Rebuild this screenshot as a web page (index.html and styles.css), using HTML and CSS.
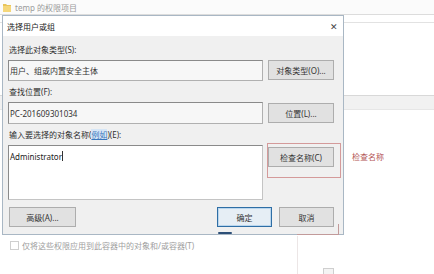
FILE: index.html
```html
<!DOCTYPE html>
<html lang="zh-CN">
<head>
<meta charset="utf-8">
<title>选择用户或组</title>
<link rel="stylesheet" href="styles.css">
</head>
<body>
<div class="bgwin">
  <div class="bg-head">
    <svg class="folder" width="8" height="9" viewBox="0 0 8 9"><path d="M0 1h3l1 1h4v7H0z" fill="#e8c45a"/><path d="M0 3h8v6H0z" fill="#f5d77a"/></svg>
    <span>temp 的权限项目</span>
  </div>
  <div class="bg-list"><div class="bg-row"></div></div>
  <div class="bg-check"><span class="box"></span><span>仅将这些权限应用到此容器中的对象和/或容器(T)</span></div>
</div>

<div class="dialog">
  <div class="dlg-title"><span>选择用户或组</span><span class="close">✕</span></div>
  <div class="dlg-body">
    <div class="label">选择此对象类型(S):</div>
    <div class="row">
      <div class="field">用户、组或内置安全主体</div>
      <button class="btn">对象类型(O)...</button>
    </div>
    <div class="label gap">查找位置(F):</div>
    <div class="row center">
      <div class="field tall">PC-201609301034</div>
      <button class="btn">位置(L)...</button>
    </div>
    <div class="label gap">输入要选择的对象名称(<span class="link">例如</span>)(E):</div>
    <div class="row">
      <div class="area">Administrator<span class="caret"></span></div>
      <button class="btn check">检查名称(C)</button>
    </div>
    <div class="footer">
      <button class="btn adv">高级(A)...</button>
      <div class="ok-cancel">
        <button class="btn small primary">确定</button>
        <button class="btn small">取消</button>
      </div>
    </div>
  </div>
</div>

<div class="anno-box"></div>
<div class="anno-text">检查名称</div>
<div class="anno-cancel"></div>
<div class="anno-tail"></div>
<div class="pen-mark"></div>
<div class="scroll-sq"></div>
</body>
</html>
```

FILE: styles.css
```css
html, body {
  margin: 0;
  padding: 0;
}
body {
  width: 434px;
  height: 274px;
  overflow: hidden;
  position: relative;
  background: #fff;
  font-family: "Noto Sans", "Noto Sans CJK SC", sans-serif;
  font-size: 8px;
  color: #2e2e2e;
}
.bg-head {
  height: 14px;
  border-bottom: 1px solid #dcdcdc;
  display: flex;
  align-items: center;
  gap: 4px;
  padding-left: 3px;
  color: #9a9a9a;
  background: #fbfbfb;
}
.bg-list {
  margin-top: 7px;
  border-top: 1px solid #e2e2e2;
  height: 213px;
}
.bg-row {
  margin-top: 72px;
  height: 13px;
  background: #f1f1f1;
  border-top: 1px solid #d8d8d8;
  border-bottom: 1px solid #e6e6e6;
}
.bg-check {
  display: flex;
  align-items: center;
  gap: 3px;
  padding-left: 10px;
  height: 14px;
  margin-top: 2px;
  color: #a0a0a0;
}
.box {
  width: 7px;
  height: 7px;
  border: 1px solid #cfcfcf;
  background: #fff;
}

.dialog {
  position: absolute;
  left: 2px;
  top: 15px;
  width: 340px;
  height: 218px;
  border: 1px solid #a9b7c4;
  background: #f0f0f0;
}
.dlg-title {
  height: 20px;
  background: #fff;
  display: flex;
  align-items: center;
  justify-content: space-between;
  padding: 0 5px 0 4px;
  color: #222;
}
.close {
  font-size: 9px;
  color: #444;
}
.dlg-body {
  padding: 8px 9px 0 5px;
}
.label {
  height: 12px;
  line-height: 12px;
  padding-left: 1px;
  margin-bottom: 4px;
}
.label.gap {
  margin-top: 5px;
}
.link {
  color: #3a78bd;
  background: #d6e6f6;
  text-decoration: underline;
}
.row {
  display: flex;
  gap: 5px;
  align-items: flex-start;
}
.row.center {
  align-items: center;
}
.field {
  width: 252px;
  height: 19px;
  border: 1px solid #8a8a8a;
  border-bottom-color: #b0b0b0;
  border-right-color: #b0b0b0;
  background: #f7f7f7;
  display: flex;
  align-items: center;
  padding-left: 1px;
  box-sizing: content-box;
  color: #333;
}
.field.tall {
  height: 20px;
}
.area {
  width: 252px;
  height: 48px;
  border: 1px solid #8a8a8a;
  border-bottom-color: #c4c4c4;
  border-right-color: #c4c4c4;
  background: #fff;
  padding: 5px 0 0 1px;
  box-sizing: content-box;
  line-height: 12px;
  color: #222;
}
.caret {
  display: inline-block;
  width: 1px;
  height: 10px;
  background: #333;
  vertical-align: -1px;
}
.btn {
  width: 66px;
  height: 20px;
  border: 1px solid #adadad;
  background: #e1e1e1;
  font-family: inherit;
  font-size: 8px;
  color: #333;
  padding: 0;
  margin: 0;
  box-sizing: border-box;
}
.btn.check {
  margin-top: 2px;
}
.footer {
  margin-top: 7px;
  display: flex;
  justify-content: space-between;
  align-items: center;
}
.btn.adv {
  width: 67px;
  margin-left: 1px;
}
.ok-cancel {
  display: flex;
  gap: 7px;
}
.btn.small {
  width: 55px;
}
.btn.primary {
  border: 1px solid #2f6ea5;
  box-shadow: inset 0 0 0 1px #b9d6ee;
  background: #e6eef5;
}

.anno-box {
  position: absolute;
  left: 267px;
  top: 143px;
  width: 72px;
  height: 33px;
  border: 1px solid #d49a9a;
}
.anno-text {
  position: absolute;
  left: 352px;
  top: 151px;
  line-height: 12px;
  color: #b35555;
}
.anno-cancel {
  position: absolute;
  left: 297px;
  top: 224px;
  width: 41px;
  height: 10px;
  border-right: 1px solid #c29a9a;
  border-bottom: 1px solid #c29a9a;
}
.anno-tail {
  position: absolute;
  left: 297px;
  top: 236px;
  width: 1px;
  height: 38px;
  background: #ece6e6;
}
.pen-mark {
  position: absolute;
  left: 218px;
  top: 232px;
  width: 14px;
  height: 2px;
  border-radius: 1px;
  background: #2d4f77;
}
.scroll-sq {
  position: absolute;
  left: 323px;
  top: 268px;
  width: 9px;
  height: 9px;
  border: 1px solid #cfcfcf;
  background: #f4f4f4;
}
```
